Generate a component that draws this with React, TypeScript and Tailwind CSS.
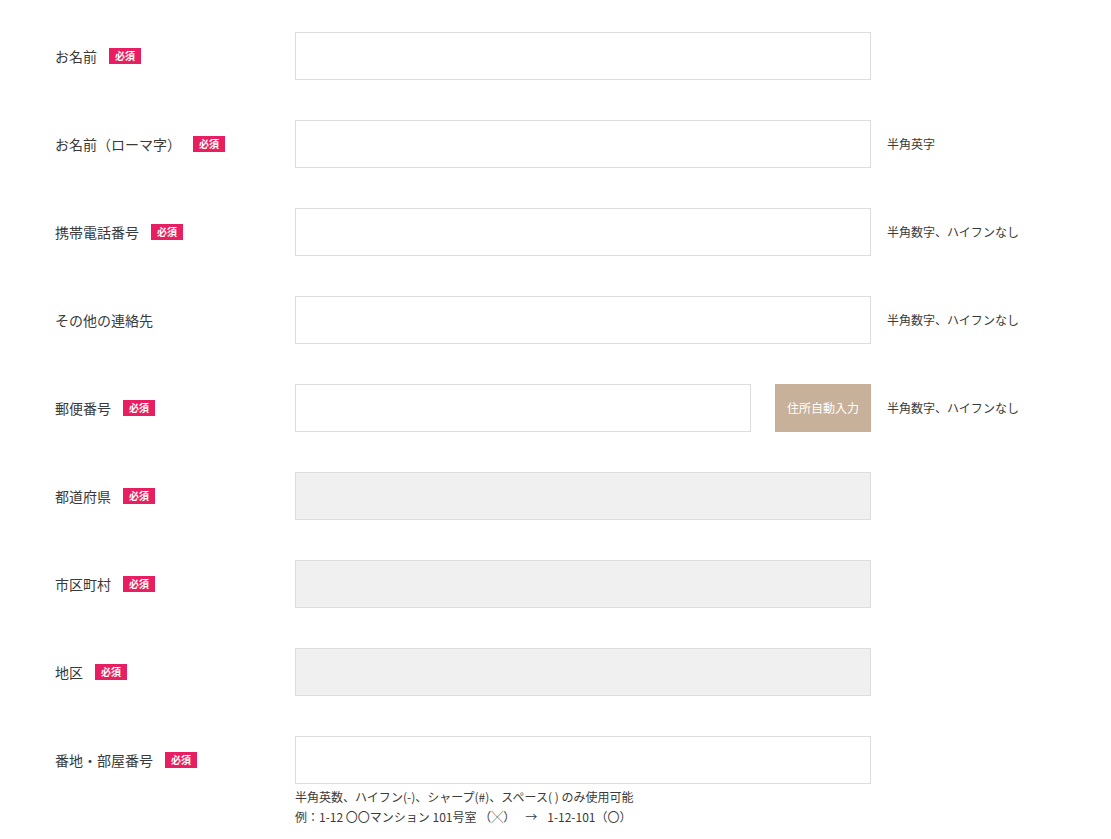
import React from "react";

const font = { fontFamily: '"Noto Sans CJK JP", "Noto Sans", sans-serif' };

function Badge() {
  return (
    <span className="ml-3 inline-flex h-[16px] w-[32px] items-center justify-center bg-[#e81e62] text-[10px] font-bold leading-none text-white">
      必須
    </span>
  );
}

type Row = {
  label: string;
  required: boolean;
  kind: "input" | "gray" | "zip";
  note?: string;
};

const rows: Row[] = [
  { label: "お名前", required: true, kind: "input" },
  { label: "お名前（ローマ字）", required: true, kind: "input", note: "半角英字" },
  { label: "携帯電話番号", required: true, kind: "input", note: "半角数字、ハイフンなし" },
  { label: "その他の連絡先", required: false, kind: "input", note: "半角数字、ハイフンなし" },
  { label: "郵便番号", required: true, kind: "zip", note: "半角数字、ハイフンなし" },
  { label: "都道府県", required: true, kind: "gray" },
  { label: "市区町村", required: true, kind: "gray" },
  { label: "地区", required: true, kind: "gray" },
];

export default function App() {
  return (
    <div className="min-h-[839px] bg-white pl-[55px] pt-[32px] text-[#3a3a3a]" style={font}>
      <div className="flex flex-col gap-[40px]">
        {rows.map((r) => (
          <div key={r.label} className="flex items-center">
            <div className="flex w-[240px] items-center text-[14px] leading-none">
              <span>{r.label}</span>
              {r.required && <Badge />}
            </div>
            {r.kind === "zip" ? (
              <div className="flex w-[576px] gap-[24px]">
                <input className="h-[48px] w-[456px] border border-[#dddddd] bg-white outline-none" />
                <button className="h-[48px] w-[96px] bg-[#c8b19a] text-[12px] text-white">
                  住所自動入力
                </button>
              </div>
            ) : (
              <input
                disabled={r.kind === "gray"}
                className={
                  r.kind === "gray"
                    ? "h-[48px] w-[576px] border border-[#dddddd] bg-[#f0f0f0] outline-none"
                    : "h-[48px] w-[576px] border border-[#dddddd] bg-white outline-none"
                }
              />
            )}
            {r.note && <span className="ml-[16px] text-[12px] leading-none">{r.note}</span>}
          </div>
        ))}
        <div className="flex">
          <div className="flex h-[48px] w-[240px] items-center text-[14px] leading-none">
            <span>番地・部屋番号</span>
            <Badge />
          </div>
          <div className="flex flex-col">
            <input className="h-[48px] w-[576px] border border-[#dddddd] bg-white outline-none" />
            <div className="mt-[3px] text-[12px] leading-[20px]">
              <p>半角英数、ハイフン(-)、シャープ(#)、スペース( ) のみ使用可能</p>
              <p>
                例：1-12 〇〇マンション 101号室 （╳）<span className="mx-[10px]">→</span>1-12-101（〇）
              </p>
            </div>
          </div>
        </div>
      </div>
    </div>
  );
}
